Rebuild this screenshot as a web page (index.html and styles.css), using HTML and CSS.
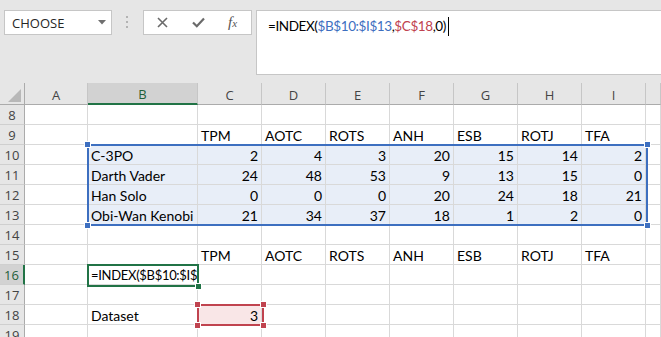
FILE: index.html
```html
<!DOCTYPE html>
<html lang="en">
<head>
  <meta charset="UTF-8">
  <meta name="viewport" content="width=device-width, initial-scale=1.0">
  <title>Star Wars - INDEX</title>
  <link rel="stylesheet" href="styles.css">
</head>
<body>
  <div class="toolbar">
    <div class="namebox">
      CHOOSE
      <svg class="caret" width="8" height="5" viewBox="0 0 8 5"><path d="M0 0 H8 L4 4.5 Z" fill="#6f6f6f"/></svg>
    </div>
    <div class="grip">
      <svg width="3" height="13" viewBox="0 0 3 13">
        <rect x="0" y="0" width="2" height="2" fill="#b3b3b3"/>
        <rect x="0" y="5" width="2" height="2" fill="#b3b3b3"/>
        <rect x="0" y="10" width="2" height="2" fill="#b3b3b3"/>
      </svg>
    </div>
    <div class="fnbox">
      <svg class="icon" width="11" height="11" viewBox="0 0 11 11"><path d="M1 1 L10 10 M10 1 L1 10" stroke="#6a6a6a" stroke-width="1.6" fill="none"/></svg>
      <svg class="icon" width="13" height="11" viewBox="0 0 13 11"><path d="M1 5.5 L4.8 9.2 L12 1.5" stroke="#6a6a6a" stroke-width="2.2" fill="none"/></svg>
      <span class="fx">f<span class="fx-x">x</span></span>
    </div>
    <div class="formula">=INDEX(<span class="ref-blue">$B$10:$I$13</span>,<span class="ref-red">$C$18</span>,0)<span class="cursor"></span></div>
  </div>

  <div class="sheet">
    <table class="grid">
      <colgroup>
        <col class="w-head"><col class="w-a"><col class="w-b">
        <col class="w-std"><col class="w-std"><col class="w-std"><col class="w-std">
        <col class="w-std"><col class="w-std"><col class="w-std"><col class="w-last">
      </colgroup>
      <tr class="colrow">
        <th class="corner"><svg width="13" height="13" viewBox="0 0 13 13"><path d="M13 0 V13 H0 Z" fill="#b8b8b8"/></svg></th>
        <th class="col">A</th><th class="col active">B</th><th class="col">C</th><th class="col">D</th>
        <th class="col">E</th><th class="col">F</th><th class="col">G</th><th class="col">H</th>
        <th class="col">I</th><th class="col"></th>
      </tr>
      <tr><th class="row">8</th><td></td><td></td><td></td><td></td><td></td><td></td><td></td><td></td><td></td><td></td></tr>
      <tr><th class="row">9</th><td></td><td></td><td>TPM</td><td>AOTC</td><td>ROTS</td><td>ANH</td><td>ESB</td><td>ROTJ</td><td>TFA</td><td></td></tr>
      <tr><th class="row">10</th><td></td><td class="hl">C-3PO</td><td class="hl n">2</td><td class="hl n">4</td><td class="hl n">3</td><td class="hl n">20</td><td class="hl n">15</td><td class="hl n">14</td><td class="hl n">2</td><td></td></tr>
      <tr><th class="row">11</th><td></td><td class="hl">Darth Vader</td><td class="hl n">24</td><td class="hl n">48</td><td class="hl n">53</td><td class="hl n">9</td><td class="hl n">13</td><td class="hl n">15</td><td class="hl n">0</td><td></td></tr>
      <tr><th class="row">12</th><td></td><td class="hl">Han Solo</td><td class="hl n">0</td><td class="hl n">0</td><td class="hl n">0</td><td class="hl n">20</td><td class="hl n">24</td><td class="hl n">18</td><td class="hl n">21</td><td></td></tr>
      <tr><th class="row">13</th><td></td><td class="hl">Obi-Wan Kenobi</td><td class="hl n">21</td><td class="hl n">34</td><td class="hl n">37</td><td class="hl n">18</td><td class="hl n">1</td><td class="hl n">2</td><td class="hl n">0</td><td></td></tr>
      <tr><th class="row">14</th><td></td><td></td><td></td><td></td><td></td><td></td><td></td><td></td><td></td><td></td></tr>
      <tr><th class="row">15</th><td></td><td></td><td>TPM</td><td>AOTC</td><td>ROTS</td><td>ANH</td><td>ESB</td><td>ROTJ</td><td>TFA</td><td></td></tr>
      <tr><th class="row active">16</th><td></td><td class="editing">=INDEX($B$10:$I$</td><td></td><td></td><td></td><td></td><td></td><td></td><td></td><td></td></tr>
      <tr><th class="row">17</th><td></td><td></td><td></td><td></td><td></td><td></td><td></td><td></td><td></td><td></td></tr>
      <tr><th class="row">18</th><td></td><td>Dataset</td><td class="rd n">3</td><td></td><td></td><td></td><td></td><td></td><td></td><td></td></tr>
      <tr><th class="row">19</th><td></td><td></td><td></td><td></td><td></td><td></td><td></td><td></td><td></td><td></td></tr>
    </table>

    <!-- range finder boxes drawn over the grid -->
    <div class="range range-blue">
      <span class="handle tl"></span><span class="handle tr"></span>
      <span class="handle bl"></span><span class="handle br"></span>
    </div>
    <div class="range range-red">
      <span class="handle tl"></span><span class="handle tr"></span>
      <span class="handle bl"></span><span class="handle br"></span>
    </div>
    <div class="range range-active">
      <span class="handle br"></span>
    </div>
  </div>
</body>
</html>
```

FILE: styles.css
```css
body {
  margin: 0;
  width: 661px;
  height: 337px;
  overflow: hidden;
  background: #e6e6e6;
  font-family: Lato, "Open Sans", sans-serif;
  color: #000;
}

.toolbar {
  display: flex;
  align-items: flex-start;
  height: 83px;
  padding: 10px 0 0 4px;
  box-sizing: border-box;
}

.namebox {
  position: relative;
  width: 108px;
  height: 25px;
  box-sizing: border-box;
  border: 1px solid #c6c6c6;
  background: #fff;
  display: flex;
  align-items: center;
  padding-left: 7px;
  font-family: "Open Sans", sans-serif;
  font-size: 13px;
  color: #262626;
}

.namebox .caret {
  position: absolute;
  right: 5px;
  top: 9px;
}

.grip {
  width: 31px;
  height: 25px;
  display: flex;
  align-items: center;
  justify-content: center;
}

.fnbox {
  width: 109px;
  height: 25px;
  box-sizing: border-box;
  border: 1px solid #c6c6c6;
  background: #fff;
  display: flex;
  align-items: center;
  gap: 24px;
  padding-left: 13px;
}

.fx {
  font-family: "Liberation Serif", serif;
  font-style: italic;
  font-size: 15px;
  color: #555;
  margin-left: -1px;
}

.fx-x {
  font-size: 11px;
}

.formula {
  flex: 1;
  height: 65px;
  margin-left: 4px;
  box-sizing: border-box;
  border-top: 1px solid #c6c6c6;
  border-left: 1px solid #c6c6c6;
  border-bottom: 1px solid #c6c6c6;
  background: #fff;
  padding: 5px 0 0 11px;
  font-size: 13.5px;
  letter-spacing: -0.4px;
  line-height: 20px;
  white-space: nowrap;
}

.ref-blue {
  color: #3d6fc0;
}

.ref-red {
  color: #c0434f;
}

.cursor {
  display: inline-block;
  width: 1px;
  height: 19px;
  margin-left: 2px;
  background: #000;
  vertical-align: -5px;
}

.sheet {
  position: relative;
  background: #fff;
}

.grid {
  border-collapse: separate;
  border-spacing: 0;
  table-layout: fixed;
  width: 661px;
}

.w-head { width: 25px; }
.w-a { width: 63px; }
.w-b { width: 110px; }
.w-std { width: 64px; }
.w-last { width: 15px; }

.grid th {
  padding: 0;
  font-family: "Open Sans", sans-serif;
  font-weight: normal;
  font-size: 13px;
  color: #444;
  background: #e6e6e6;
}

.colrow {
  height: 22px;
}

.grid th.col {
  border-right: 1px solid #c6c6c6;
  border-bottom: 1px solid #ababab;
  height: 21px;
  box-sizing: border-box;
  vertical-align: middle;
  padding-top: 2px;
}

.grid th.col.active {
  background: #d2d2d2;
  color: #1f5f3a;
  border-bottom: 2px solid #217346;
}

.grid th.corner {
  border-right: 1px solid #ababab;
  border-bottom: 1px solid #ababab;
  text-align: right;
  vertical-align: bottom;
  line-height: 0;
  padding: 0 3px 2px 0;
}

.grid th.row {
  height: 20px;
  box-sizing: border-box;
  border-right: 1px solid #ababab;
  border-bottom: 1px solid #cfcfcf;
  text-align: center;
  vertical-align: middle;
}

.grid th.row.active {
  background: #d2d2d2;
  color: #1f5f3a;
  border-right: 2px solid #217346;
}

.grid td {
  height: 20px;
  box-sizing: border-box;
  padding: 0 3px;
  border-right: 1px solid #d9d9d9;
  border-bottom: 1px solid #d9d9d9;
  font-size: 14px;
  line-height: 17px;
  vertical-align: bottom;
  white-space: nowrap;
  overflow: hidden;
}

.grid td.editing {
  padding: 0 0 0 3px;
  font-size: 13px;
  letter-spacing: -0.3px;
  text-overflow: clip;
}

.grid td.n {
  text-align: right;
}

.grid td.hl {
  background: #e8eef8;
}

.grid td.rd {
  background: #f9e6e7;
}

.range {
  position: absolute;
  box-sizing: border-box;
  pointer-events: none;
}

.range-blue {
  left: 87px;
  top: 61px;
  width: 561px;
  height: 82px;
  border: 2px solid #3d6fc0;
}

.range-red {
  left: 197px;
  top: 221px;
  width: 67px;
  height: 22px;
  border: 2px solid #c0434f;
}

.range-active {
  left: 87px;
  top: 181px;
  width: 112px;
  height: 23px;
  border: 2px solid #217346;
}

.handle {
  position: absolute;
  width: 5px;
  height: 5px;
  background: #3d6fc0;
  border: 1px solid #fff;
}

.range-red .handle {
  background: #c0434f;
}

.range-active .handle {
  background: #217346;
}

.handle.tl { left: -5px; top: -5px; }
.handle.tr { right: -5px; top: -5px; }
.handle.bl { left: -5px; bottom: -5px; }
.handle.br { right: -5px; bottom: -5px; }
```
